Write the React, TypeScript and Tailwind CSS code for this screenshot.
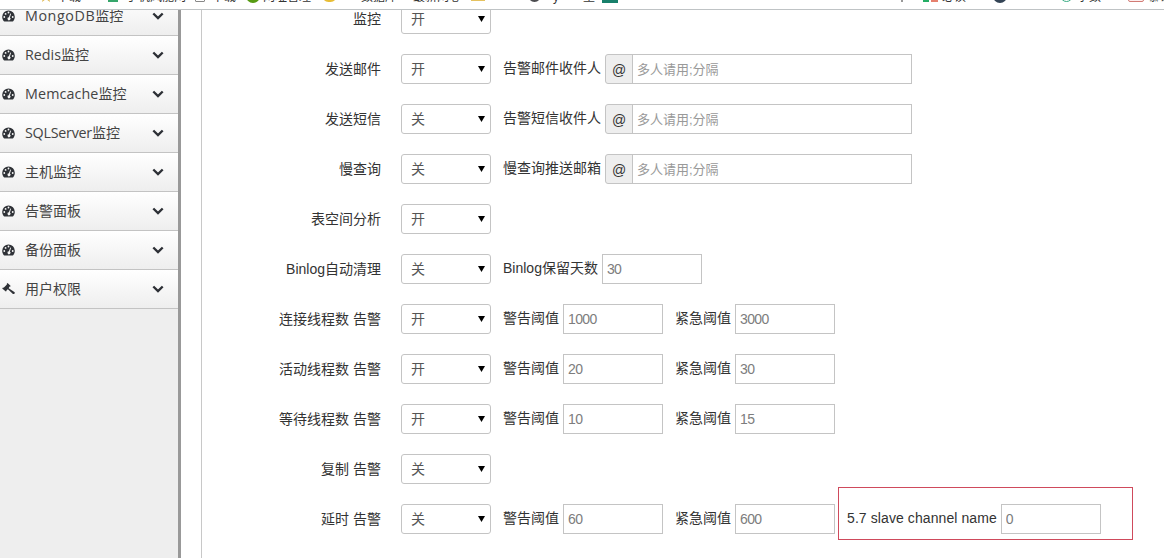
import React from 'react';

function Gauge() {
  return (
    <svg viewBox="0 0 13 12" className="h-[12px] w-[13px] shrink-0 fill-[#2f3237]">
      <path
        fillRule="evenodd"
        d="M6.500.5A6.300 6.300 0 0 0 .2 6.800c0 1.700.6 3.200 1.400 4.200.2.300.4.400.7.400h8.400c.3 0 .5-.1.700-.4.900-1.100 1.400-2.500 1.400-4.200A6.300 6.300 0 0 0 6.500.5zM2.300 6.100a.9.900 0 1 1 0 1.800.9.900 0 0 1 0-1.800zM3.600 3a.9.900 0 1 1 0 1.800.9.900 0 0 1 0-1.800zM6.500 1.600a.9.900 0 1 1 0 1.800.9.900 0 0 1 0-1.800zM10.700 6.100a.9.900 0 1 1 0 1.800.9.900 0 0 1 0-1.800zM8.300 3.500l.8.300-1.200 3.800a1.500 1.500 0 1 1-1-.3z"
      />
    </svg>
  );
}

function Gavel() {
  return (
    <svg viewBox="0 0 13 12" className="h-[12px] w-[13px] shrink-0 fill-[#2f3237]">
      <path d="M5.600 0L8.700 3 8 3.700 7.500 3.600 6.700 5.300 12.700 9.200 12.800 10.300 12 11.100 10.900 11 5.900 6.300 4.500 7.200 4.600 7.900 3.800 8.600.2 5.400 1 4.600 1.700 4.700 4.900 1.400 4.800.8z" />
    </svg>
  );
}

function Chevron() {
  return (
    <svg viewBox="0 0 12 8" className="h-[8px] w-[12px] shrink-0" fill="none">
      <path d="M1.300 1.500L6 6l4.700-4.500" stroke="#2d3036" strokeWidth="2.400" />
    </svg>
  );
}

const menu = [
  { latin: 'MongoDB', label: '监控', track: 'tracking-[0.57px]' },
  { latin: 'Redis', label: '监控', track: '' },
  { latin: 'Memcache', label: '监控', track: 'tracking-[0.12px]' },
  { latin: 'SQLServer', label: '监控', track: 'tracking-[-0.25px]' },
  { latin: '', label: '主机监控', track: '' },
  { latin: '', label: '告警面板', track: '' },
  { latin: '', label: '备份面板', track: '' },
  { latin: '', label: '用户权限', track: '', gavel: true },
];

function Sidebar() {
  return (
    <aside className="w-[181px] shrink-0 overflow-hidden border-r-[3px] border-[#999] bg-[#eee]">
      <nav className="-mt-[13px]">
        {menu.map((m) => (
          <a
            key={m.latin + m.label}
            className="flex h-[39px] items-center border-b border-[#c3c3c3] bg-linear-to-b from-white to-[#eeeeee] pl-[2px] pr-[14px] text-[14px] text-[#444]"
          >
            {m.gavel ? <Gavel /> : <Gauge />}
            <span className="ml-[10px] flex-1 whitespace-nowrap leading-[20px]">
              <span className={`font-['Open_Sans','Noto_Sans',sans-serif] text-[14.3px] ${m.track}`}>{m.latin}</span>
              {m.label}
            </span>
            <Chevron />
          </a>
        ))}
      </nav>
    </aside>
  );
}

function Bookmark({ className, children }: { className: string; children: string }) {
  return <span className={`shrink-0 whitespace-nowrap pt-px ${className}`}>{children}</span>;
}

function BookmarkBar() {
  return (
    <header className="flex h-[10px] shrink-0 items-end overflow-hidden border-b border-[#bfc3c5] bg-white pl-[40px] text-[12px] leading-[12px] text-[#333]">
      <div className="flex h-[19px] w-full shrink-0 items-start">
        <svg viewBox="0 0 12 12" className="h-[12px] w-[12px] shrink-0 fill-[#dfb74f]">
          <path d="M6 0l1.700 4H12L8.700 7 10 12 6 9l-4 3 1.300-5L0 4h4.300z" />
        </svg>
        <Bookmark className="ml-[5px] w-[51px]">下载</Bookmark>
        <i className="h-[12px] w-[10px] shrink-0 bg-[#36a66b]" />
        <Bookmark className="ml-[8px] w-[69px]">手机风能网</Bookmark>
        <i className="h-[12px] w-[10px] shrink-0 rounded-[1px] border border-[#888]" />
        <Bookmark className="ml-[7px] w-[34px]">下载</Bookmark>
        <i className="-mt-px h-[14px] w-[14px] shrink-0 rounded-full border-[3px] border-[#579b13] bg-[#c8e59a]" />
        <Bookmark className="ml-[3px] w-[59px]">网址管理</Bookmark>
        <i className="-mt-px h-[13px] w-[15px] shrink-0 rounded-full bg-[#e8bd35]" />
        <Bookmark className="ml-[24px] w-[52px]">数据库</Bookmark>
        <Bookmark className="w-[58px]">最新网心</Bookmark>
        <i className="h-[11px] w-[14px] shrink-0 bg-[#e5c260]" />
        <i className="-mt-px ml-[43px] h-[13px] w-[13px] shrink-0 rounded-full bg-[#4c4c50]" />
        <Bookmark className="ml-[12px] w-[30px]">y</Bookmark>
        <Bookmark className="w-[19px]">里</Bookmark>
        <i className="h-[13px] w-[16px] shrink-0 bg-[#18806b]" />
        <i className="ml-[283px] h-[12px] w-[2px] shrink-0 bg-[#999]" />
        <i className="ml-[20px] h-[12px] w-[6px] shrink-0 bg-[#24ad65]" />
        <i className="ml-[2px] h-[12px] w-[7px] shrink-0 bg-[#e6806e]" />
        <Bookmark className="ml-[4px] w-[51px]">必读</Bookmark>
        <i className="-mt-px h-[14px] w-[14px] shrink-0 rounded-full bg-[#334355]" />
        <i className="-mt-px ml-[53px] h-[13px] w-[13px] shrink-0 rounded-full border border-[#37aa83]" />
        <Bookmark className="ml-[4px] w-[51px]">字数</Bookmark>
        <i className="h-[12px] w-[16px] shrink-0 rounded-[2px] border border-[#d17b75] bg-[#fdeeee]" />
        <Bookmark className="ml-[4px] w-[30px]">慕课</Bookmark>
      </div>
    </header>
  );
}

function Toggle({ value }: { value: string }) {
  return (
    <div className="relative h-[30px] w-[90px] shrink-0">
      <select
        defaultValue={value}
        className="h-full w-full appearance-none rounded-[3px] border border-[#c4c4c4] bg-white pl-[9px] text-[14px] text-[#555] outline-none"
      >
        <option>{value}</option>
      </select>
      <svg viewBox="0 0 7 6" className="pointer-events-none absolute right-[6px] top-[12px] h-[6px] w-[7px] fill-black">
        <path d="M0 0h7L3.500 6z" />
      </svg>
    </div>
  );
}

function Caption({ children }: { children: string }) {
  return <span className="relative -top-px mr-[4px] whitespace-nowrap">{children}</span>;
}

function NumberField({ label, value }: { label: string; value: string }) {
  return (
    <label className="ml-[12px] flex shrink-0 items-center">
      <Caption>{label}</Caption>
      <input
        defaultValue={value}
        className="h-[30px] w-[100px] border border-[#c4c4c4] bg-white px-[4px] text-[14px] tracking-[-0.6px] text-[#7d7d7d] outline-none"
      />
    </label>
  );
}

function MailField({ label }: { label: string }) {
  return (
    <label className="ml-[12px] flex shrink-0 items-center">
      <Caption>{label}</Caption>
      <span className="flex h-[30px] w-[28px] items-center justify-center rounded-l-[3px] border border-[#c4c4c4] bg-[#eee] pt-[2px] text-[14px]">
        @
      </span>
      <input
        placeholder="多人请用;分隔"
        className="-ml-px h-[30px] w-[280px] border border-[#c4c4c4] bg-white px-[4px] text-[13px] outline-none placeholder:text-[#999]"
      />
    </label>
  );
}

type Row = { name: string; value: string; mail?: string; fields?: [string, string][]; channel?: boolean };

const rows: Row[] = [
  { name: '监控', value: '开' },
  { name: '发送邮件', value: '开', mail: '告警邮件收件人' },
  { name: '发送短信', value: '关', mail: '告警短信收件人' },
  { name: '慢查询', value: '关', mail: '慢查询推送邮箱' },
  { name: '表空间分析', value: '开' },
  { name: 'Binlog自动清理', value: '关', fields: [['Binlog保留天数', '30']] },
  { name: '连接线程数 告警', value: '开', fields: [['警告阈值', '1000'], ['紧急阈值', '3000']] },
  { name: '活动线程数 告警', value: '开', fields: [['警告阈值', '20'], ['紧急阈值', '30']] },
  { name: '等待线程数 告警', value: '开', fields: [['警告阈值', '10'], ['紧急阈值', '15']] },
  { name: '复制 告警', value: '关' },
  { name: '延时 告警', value: '关', fields: [['警告阈值', '60'], ['紧急阈值', '600']], channel: true },
];

export default function App() {
  return (
    <div className="flex h-[558px] w-[1164px] flex-col overflow-hidden bg-white font-['Liberation_Sans','Noto_Sans_CJK_SC',sans-serif] text-[14px] text-[#333]">
      <BookmarkBar />
      <div className="flex min-h-0 flex-1">
        <Sidebar />
        <main className="ml-[20px] flex-1 overflow-hidden border-l border-[#c8c8c8]">
          <form className="-mt-[6px] flex flex-col gap-[20px]">
            {rows.map((r) => (
              <div key={r.name} className="flex h-[30px] items-center">
                <span className="mr-[20px] w-[179px] shrink-0 whitespace-nowrap text-right">{r.name}</span>
                <Toggle value={r.value} />
                {r.mail && <MailField label={r.mail} />}
                {r.fields?.map(([label, value]) => (
                  <NumberField key={label} label={label} value={value} />
                ))}
                {r.channel && (
                  <div className="-mt-[11px] ml-[3px] flex h-[53px] w-[295px] shrink-0 items-center border border-[#cf4a5c]">
                    <div className="-ml-[4px] mt-[11px] tracking-[0.09px]">
                      <NumberField label="5.7 slave channel name" value="0" />
                    </div>
                  </div>
                )}
              </div>
            ))}
          </form>
        </main>
      </div>
    </div>
  );
}
